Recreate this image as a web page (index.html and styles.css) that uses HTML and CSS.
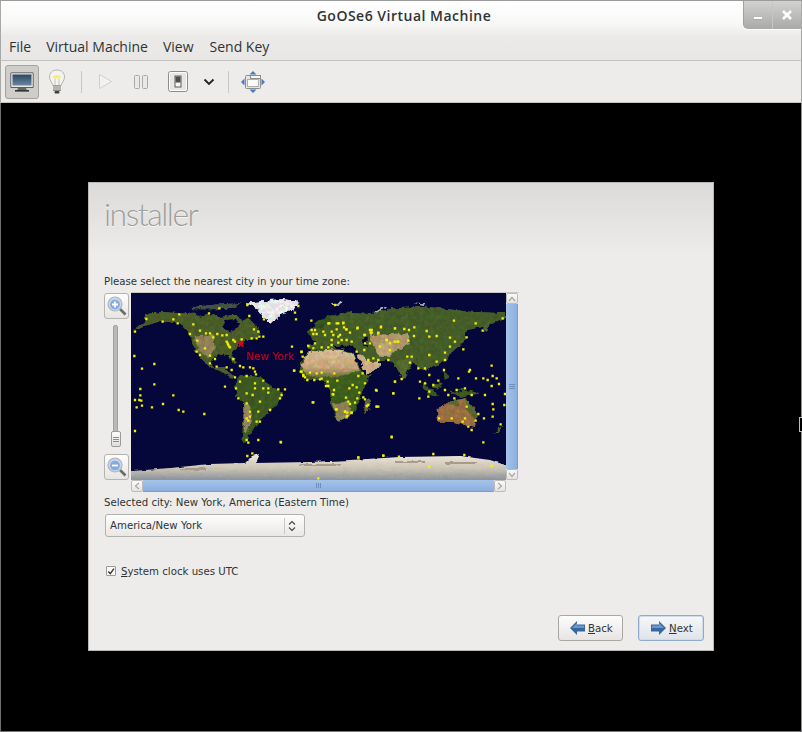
FILE: index.html
```html
<!DOCTYPE html>
<html lang="en">
<head>
<meta charset="utf-8">
<title>GoOSe6 Virtual Machine</title>
<link rel="stylesheet" href="styles.css">
</head>
<body>
<div class="window">
  <header class="chrome">
    <div class="title">GoOSe6 Virtual Machine</div>
    <div class="wm-buttons">
      <span class="wm-btn"><svg width="10" height="10" viewBox="0 0 10 10"><rect x="1" y="7" width="8" height="2.4" fill="#fff"/><rect x="1" y="9.4" width="8" height=".8" fill="#8b8b8b"/></svg></span>
      <span class="wm-btn"><svg width="12" height="12" viewBox="0 0 12 12"><path d="M2 2l8 8M10 2l-8 8" stroke="#fff" stroke-width="2.6"/></svg></span>
    </div>
    <nav class="menu">
      <span class="menu-item">File</span>
      <span class="menu-item">Virtual Machine</span>
      <span class="menu-item">View</span>
      <span class="menu-item">Send Key</span>
    </nav>
  </header>

  <div class="toolbar">
    <span class="tool tool-active">
      <svg width="24" height="22" viewBox="0 0 24 22">
        <defs><linearGradient id="scr" x1="0" y1="0" x2="0" y2="1"><stop offset="0" stop-color="#2e4560"/><stop offset="1" stop-color="#6a87a4"/></linearGradient></defs>
        <rect x=".5" y="1.500" width="23" height="15.500" rx="1" fill="#3a3a3a"/>
        <rect x="1.200" y="2.200" width="21.600" height="14" fill="#e8e8e6"/>
        <rect x="2.500" y="3.500" width="19" height="11" fill="url(#scr)"/>
        <path d="M8 17h8l1 2.400H7z" fill="#666"/><rect x="5" y="19" width="14" height="1.600" fill="#333"/>
      </svg>
    </span>
    <span class="tool">
      <svg width="18" height="26" viewBox="0 0 18 26">
        <path d="M9 1c4.700 0 7.500 3.100 7.500 7 0 3.400-2.500 5-3.400 8.500H4.900C4 13 1.500 11.400 1.500 8 1.500 4.100 4.300 1 9 1z" fill="#f4f4f1" stroke="#b4b4b0"/>
        <path d="M4.500 8c2.200-2.800 6.800-2.800 9 0-1.700 2-7.300 2-9 0z" fill="#f6ec7c"/>
        <path d="M7 10v6.500M11 10v6.500" stroke="#c6c6bc"/>
        <rect x="5" y="16.500" width="8" height="5.500" fill="#8d8d8a"/>
        <path d="M5 18h8M5 20h8" stroke="#dcdcda"/>
        <rect x="6.500" y="22" width="5" height="2.500" rx="1" fill="#3f3f3f"/>
      </svg>
    </span>
    <span class="sep sep-first"></span>
    <span class="tool tool-play">
      <svg width="15" height="17" viewBox="0 0 15 17"><path d="M1.500 1.500v14l12-7z" fill="#f3f2f0" stroke="#cfcfcc"/></svg>
    </span>
    <span class="tool tool-pause">
      <svg width="14" height="14" viewBox="0 0 14 14"><rect x=".5" y=".5" width="5" height="13" rx="1" fill="#e9e8e6" stroke="#a9a9a6"/><rect x="8.500" y=".5" width="5" height="13" rx="1" fill="#e9e8e6" stroke="#a9a9a6"/></svg>
    </span>
    <span class="tool tool-power">
      <svg width="20" height="21" viewBox="0 0 20 21">
        <rect x=".5" y=".5" width="19" height="20" rx="2" fill="#fafaf9" stroke="#8d8d8b"/>
        <rect x="2" y="2" width="16" height="17" rx="1" fill="#e6e6e4"/>
        <rect x="7" y="5" width="6" height="11" fill="#f5f5f4" stroke="#5a5a5a"/>
        <rect x="7.500" y="5.500" width="5" height="6" fill="#4c4c4c"/>
      </svg>
    </span>
    <span class="tool tool-chev">
      <svg width="12" height="8" viewBox="0 0 12 8"><path d="M1.500 1.500L6 6l4.500-4.500" fill="none" stroke="#222" stroke-width="1.800"/></svg>
    </span>
    <span class="sep sep-second"></span>
    <span class="tool tool-full">
      <svg width="24" height="22" viewBox="0 0 24 22">
        <path d="M12 0l3.500 3.500h-7zM12 22l3.500-3.500h-7zM0 11l3.500-3.500v7zM24 11l-3.500-3.500v7z" fill="#4a7ab8"/>
        <rect x="4.500" y="4.500" width="15" height="13" rx="1" fill="#e4e4e2" stroke="#8e8e8c"/>
        <rect x="9.500" y="4.500" width="10" height="3" fill="#f6f6f5" stroke="#8e8e8c"/>
        <rect x="6.500" y="8.500" width="11" height="7" fill="#fbfbfa" stroke="#b0b0ae"/>
      </svg>
    </span>
  </div>

  <main class="viewport">
    <section class="installer">
      <div class="banner"><span class="logo">installer</span></div>
      <div class="content">
        <p class="label">Please select the nearest city in your time zone:</p>
        <div class="map-row">
          <div class="zoom-col">
            <span class="zoom-btn">
              <svg width="22" height="22" viewBox="0 0 22 22">
                <path d="M13.500 13.500l6 6" stroke="#6b6b6b" stroke-width="2.600"/>
                <circle cx="9" cy="9" r="7" fill="#c3d6ee" stroke="#b4b4b4" stroke-width="1.200"/>
                <circle cx="9" cy="9.500" r="4.800" fill="#86aadd"/>
                <path d="M6 9.500h6M9 6.500v6" stroke="#fff" stroke-width="1.800"/>
              </svg>
            </span>
            <div class="slider"><span class="slider-track"></span><span class="slider-thumb"><i></i><i></i><i></i></span></div>
            <span class="zoom-btn">
              <svg width="22" height="22" viewBox="0 0 22 22">
                <path d="M13.500 13.500l6 6" stroke="#6b6b6b" stroke-width="2.600"/>
                <circle cx="9" cy="9" r="7" fill="#c3d6ee" stroke="#b4b4b4" stroke-width="1.200"/>
                <circle cx="9" cy="9.500" r="4.800" fill="#86aadd"/>
                <path d="M6 9.500h6" stroke="#fff" stroke-width="1.800"/>
              </svg>
            </span>
          </div>
          <div class="map-scroller">
            <div class="map-top">
              <svg class="map" width="375" height="187" viewBox="131 293 375 187">
                <defs>
                  <linearGradient id="ice" x1="0" y1="0" x2="0" y2="1"><stop offset="0" stop-color="#efe9dc"/><stop offset=".4" stop-color="#cbc4b4"/><stop offset=".72" stop-color="#8a929b"/><stop offset="1" stop-color="#cdcdca"/></linearGradient>
                  <linearGradient id="sahara" x1="0" y1="0" x2="0" y2="1"><stop offset="0" stop-color="#ecd2a6"/><stop offset=".65" stop-color="#dcb586"/><stop offset="1" stop-color="#6f7a3c"/></linearGradient>
                  <filter id="soft" x="0" y="0" width="100%" height="100%">
                    <feTurbulence type="fractalNoise" baseFrequency=".2" numOctaves="3" seed="7" result="n"/>
                    <feDisplacementMap in="SourceGraphic" in2="n" scale="5" xChannelSelector="R" yChannelSelector="G" result="d"/>
                    <feComposite in="d" in2="n" operator="arithmetic" k1="1" k2=".5" result="m"/>
                    <feMerge result="o"><feMergeNode in="d"/><feMergeNode in="m"/></feMerge>
                    <feGaussianBlur in="o" stdDeviation=".45"/>
                  </filter>
                  <filter id="soft-ice" x="0" y="0" width="100%" height="100%">
                    <feTurbulence type="fractalNoise" baseFrequency=".12 .3" numOctaves="2" seed="3" result="n"/>
                    <feDisplacementMap in="SourceGraphic" in2="n" scale="3" xChannelSelector="R" yChannelSelector="G"/>
                    <feGaussianBlur stdDeviation=".5"/>
                  </filter>
                </defs>
                <rect x="131" y="293" width="375" height="187" fill="#05063a"/>
                <g filter="url(#soft)">
                  <rect x="131" y="293" width="375" height="187" fill="none"/>
                  <g transform="translate(100 290) scale(.3333)">
                    <path fill="#52682f" d="M135 72L190 66 240 70 285 68 300 80 340 72 360 82 400 74 425 90 450 88 470 112 482 128 462 148 435 150 410 172 395 190 410 218 402 222 388 195 360 192 338 205 328 222 345 232 372 232 385 245 405 262 392 262 365 245 335 232 310 212 288 185 270 135 240 100 205 92 165 98 130 112 100 122 135 95z"/>
                    <path fill="#05063a" d="M372 90L405 88 420 105 405 120 385 125 370 110z"/>
                    <path fill="#4c5c4a" d="M270 52L340 44 420 40 400 56 330 58 280 58z"/>
                    <path fill="#a08f60" d="M280 140L340 135 345 180 325 205 300 185z"/>
                    <path fill="#ffffff" d="M440 38L530 30 590 30 575 55 530 75 515 100 490 80 470 55z"/>
                    <path fill="#446426" d="M405 290L420 255 470 260 510 285 548 310 530 345 505 365 480 395 455 420 435 460 425 450 430 400 435 340 410 320z"/>
                    <path fill="#a39263" d="M430 340L450 345 455 395 440 430 432 420z"/>
                  </g>
                  <g transform="translate(270 290) scale(.3333)">
                    <path fill="#ffffff" d="M0 30L40 28 85 35 70 60 30 75 5 100 0 100z"/>
                    <path fill="#456823" d="M92 215L125 180 190 175 250 190 265 225 290 260 305 252 280 295 265 340 245 375 205 395 185 350 180 300 160 270 105 268 90 240z"/>
                    <path fill="url(#sahara)" d="M92 225L120 185 190 178 250 192 270 245 190 262 110 258z"/>
                    <path fill="#9c8d5d" d="M185 340L235 335 245 375 205 395z"/>
                    <path fill="#3a5a20" d="M110 125L165 80 230 68 290 85 260 140 190 150 125 145z"/>
                    <path fill="#506a2c" d="M112 165L190 155 240 165 190 175 120 178z"/>
                    <path fill="#6b6f45" d="M285 335L300 325 298 360 283 368z"/>
                    <path fill="#e0c092" d="M262 195L290 190 335 225 290 255z"/>
                  </g>
                  <g transform="translate(310 290) scale(.3333)">
                    <path fill="#4e682f" d="M40 110L70 80 110 65 190 70 250 55 350 50 480 65 585 70 585 85 520 110 470 120 465 155 420 190 410 210 380 225 345 240 325 235 310 215 280 270 255 225 235 210 200 215 175 215 150 190 130 170 80 180 20 170 0 130 20 115z"/>
                    <path fill="#bfa574" d="M180 135L290 130 300 160 250 190 215 195 190 170z"/>
                    <path fill="#d0b484" d="M200 160L250 155 240 200 205 200z"/>
                    <path fill="#607634" d="M255 210L305 205 280 270z"/>
                    <path fill="#05063a" d="M160 140h10v28h-10zM70 167h60v8H70z"/>
                    <path fill="#446426" d="M340 275L365 300 390 320 360 315 335 290zM370 285L395 280 385 298 368 296zM400 235L415 262 405 272zM415 300L480 315 450 320zM440 295L510 310 470 318z"/>
                    <path fill="#a87a4a" d="M380 355L420 335 465 325 500 365 495 410 465 405 430 395 385 395z"/>
                    <path fill="#5f7436" d="M465 325L500 365 497 395 470 360zM408 342L440 330 445 345z"/>
                    <path fill="#55703e" d="M550 432L578 405 566 425zM520 125L528 102 540 95 530 122z"/>
                    <path fill="#c5c5be" d="M60 40L95 38 85 46 70 47zM190 66L235 48 230 52 198 68zM310 38L350 40 340 44z"/>
                  </g>
                </g>
                <g filter="url(#soft-ice)">
                  <path fill="url(#ice)" d="M120 472L170 468 210 464 245 463 252 456 260 454 256 463 310 462 350 460 400 457 460 456 490 460 518 469V490H120z"/>
                  <path fill="#a79c88" d="M180 468h26v2h-26zM300 464h40v2h-40zM395 461h30v2h-30zM445 462h32v2h-32z"/>
                </g>
                <g transform="translate(100 290) scale(.3333)">
                  <path class="dots" d="M139 87h0M238 73h0M220 88h0M188 95h0M233 100h0M280 103h0M327 70h0M358 55h0M442 45h0M448 78h0M492 88h0M105 125h0M300 122h0M270 132h0M318 130h0M330 130h0M340 142h0M352 132h0M367 136h0M380 135h0M400 150h0M425 148h0M455 145h0M470 145h0M478 140h0M490 140h0M475 125h0M462 118h0M292 152h0M315 175h0M290 185h0M330 197h0M300 195h0M345 207h0M330 220h0M350 230h0M380 155h0M385 165h0M390 172h0M383 160h0M405 155h0M388 170h0M400 207h0M420 228h0M380 232h0M395 240h0M430 232h0M450 232h0M460 235h0M465 245h0M468 253h0M103 198h0M163 222h0M126 236h0M163 283h0M121 297h0M121 316h0M105 330h0M118 330h0M124 332h0M126 347h0M110 352h0M156 352h0M189 342h0M220 316h0M236 360h0M250 365h0M313 372h0M105 423h0M375 290h0M405 262h0M420 275h0M440 258h0M465 280h0M490 272h0M505 295h0M408 295h0M440 310h0M465 295h0M490 295h0M505 308h0M535 298h0M555 298h0M545 315h0M540 325h0M458 315h0M415 325h0M480 335h0M440 340h0M510 360h0M475 365h0M450 365h0M450 380h0M440 385h0M445 392h0M470 395h0M480 395h0M440 450h0M445 458h0M475 450h0M543 457h0M442 498h0M457 490h0M583 242h0M605 185h0M602 245h0M610 255h0"/>
                </g>
                <g transform="translate(270 290) scale(.3333)">
                  <path class="dots" d="M85 48h0M75 68h0M78 88h0M124 92h0M66 170h0M94 186h0M98 200h0M72 242h0M95 245h0M100 258h0M105 262h0M120 248h0M140 250h0M155 248h0M193 250h0M112 270h0M133 270h0M150 268h0M155 266h0M173 275h0M168 288h0M175 288h0M192 300h0M188 313h0M202 272h0M238 295h0M248 285h0M265 258h0M278 250h0M285 280h0M260 292h0M262 325h0M268 308h0M228 323h0M235 335h0M255 338h0M240 342h0M128 337h0M225 365h0M232 368h0M245 368h0M230 380h0M198 358h0M280 322h0M285 328h0M295 345h0M320 350h0M318 300h0M370 310h0M375 275h0M365 440h0M32 456h0M265 503h0M340 497h0M145 565h0M125 120h0M135 120h0M130 132h0M140 132h0M160 125h0M165 135h0M185 125h0M175 100h0M205 100h0M220 100h0M222 112h0M200 118h0M190 135h0M210 135h0M230 118h0M240 128h0M262 115h0M185 150h0M205 140h0M215 150h0M230 150h0M205 158h0M245 155h0M185 165h0M175 172h0M155 172h0M130 175h0M115 168h0M135 160h0M283 135h0M300 120h0M305 128h0M325 128h0M333 112h0M375 115h0M350 150h0M360 160h0M300 160h0M285 160h0M283 180h0M260 185h0M330 170h0M360 180h0M385 155h0M355 210h0M310 205h0M295 210h0M325 210h0"/>
                </g>
                <g transform="translate(310 290) scale(.3333)">
                  <path class="dots" d="M75 45h0M58 100h0M80 100h0M100 98h0M108 118h0M143 113h0M213 110h0M255 115h0M283 117h0M297 120h0M313 112h0M350 123h0M432 92h0M497 100h0M518 122h0M578 85h0M185 120h0M205 130h0M165 135h0M182 128h0M230 150h0M255 155h0M263 155h0M295 152h0M312 138h0M358 140h0M380 138h0M420 143h0M470 142h0M435 155h0M420 170h0M460 178h0M405 188h0M358 195h0M305 200h0M292 200h0M300 218h0M405 210h0M380 215h0M325 235h0M345 235h0M358 255h0M402 240h0M480 240h0M477 245h0M545 227h0M445 265h0M498 265h0M520 265h0M533 270h0M548 258h0M560 265h0M567 282h0M545 288h0M275 267h0M255 275h0M330 275h0M345 280h0M370 285h0M385 272h0M358 305h0M405 300h0M440 300h0M465 295h0M485 315h0M525 315h0M200 302h0M250 310h0M328 325h0M355 320h0M415 315h0M433 325h0M470 350h0M585 312h0M548 342h0M550 358h0M583 345h0M505 372h0M522 385h0M548 380h0M387 385h0M425 385h0M465 385h0M497 392h0M458 395h0M475 410h0M485 420h0M572 403h0M245 442h0M520 457h0M10 337h0M80 358h0M105 365h0M125 368h0M112 378h0M70 313h0M170 348h0M200 350h0M205 350h0M145 502h0M220 497h0M267 500h0M370 492h0M463 495h0M545 528h0M358 530h0"/>
                </g>
                <path d="M238.500 341.500l5 5M243.500 341.500l-5 5" stroke="#e00018" stroke-width="1.800"/>
                <text class="city" x="246" y="360">New York</text>
              </svg>
              <div class="vscroll">
                <span class="arrow arrow-v"><svg width="8" height="6" viewBox="0 0 8 6"><path d="M1 5l3-3.500L7 5" fill="none" stroke="#a8a8a6" stroke-width="1.200"/></svg></span>
                <span class="vthumb"><i></i><i></i><i></i></span>
                <span class="arrow arrow-v"><svg width="8" height="6" viewBox="0 0 8 6"><path d="M1 1l3 3.500L7 1" fill="none" stroke="#a8a8a6" stroke-width="1.200"/></svg></span>
              </div>
            </div>
            <div class="hscroll">
              <span class="arrow arrow-h"><svg width="6" height="8" viewBox="0 0 6 8"><path d="M5 1L1.500 4 5 7" fill="none" stroke="#a8a8a6" stroke-width="1.200"/></svg></span>
              <span class="hthumb"><i></i><i></i><i></i></span>
              <span class="arrow arrow-h"><svg width="6" height="8" viewBox="0 0 6 8"><path d="M1 1l3.500 3L1 7" fill="none" stroke="#a8a8a6" stroke-width="1.200"/></svg></span>
            </div>
          </div>
        </div>
        <p class="label label-city">Selected city: New York, America (Eastern Time)</p>
        <div class="combo">
          <span class="combo-text">America/New York</span>
          <span class="combo-sep"></span>
          <svg width="8" height="12" viewBox="0 0 8 12"><path d="M1 4.500L4 1.500l3 3M1 7.500l3 3 3-3" fill="none" stroke="#444" stroke-width="1.100"/></svg>
        </div>
        <div class="check-row">
          <span class="checkbox"><svg width="9" height="9" viewBox="0 0 9 9"><path d="M1.500 4.500L3.700 7 7.800 1.200" fill="none" stroke="#333" stroke-width="1.500"/></svg></span>
          <span class="check-label"><u>S</u>ystem clock uses UTC</span>
        </div>
        <div class="actions">
          <span class="btn btn-back">
            <svg width="15" height="14" viewBox="0 0 15 14"><path d="M0 7l7-7v3.500h8v7H7V14z" fill="#36689f"/><path d="M2 7l5-5v2.500h7V7z" fill="#6b97cc"/></svg>
            <span><u>B</u>ack</span>
          </span>
          <span class="btn btn-default">
            <svg width="15" height="14" viewBox="0 0 15 14"><path d="M15 7L8 0v3.500H0v7h8V14z" fill="#36689f"/><path d="M13 7L8 2v2.500H1V7z" fill="#6b97cc"/></svg>
            <span><u>N</u>ext</span>
          </span>
        </div>
      </div>
    </section>
    <span class="edge-handle"></span>
  </main>
</div>
</body>
</html>
```
FILE: styles.css
```css
* { box-sizing: border-box; }
html, body { margin: 0; padding: 0; background: #000; }
body { width: 802px; height: 732px; overflow: hidden; font-family: "DejaVu Sans", sans-serif; }
p { margin: 0; }
i { display: block; }

.window { position: relative; width: 802px; height: 732px; display: flex; flex-direction: column; border-top: 1px solid #9b9b99; border-bottom: 1px solid #77777a; }

.chrome { position: relative; height: 60px; flex: none; background: linear-gradient(#ffffff 0, #f8f8f7 22px, #ebeae8 36px, #e8e7e5 100%); border-left: 1px solid #a8a8a6; border-right: 1px solid #a8a8a6; border-bottom: 1px solid #c3c2bf; display: flex; flex-direction: column; }
.title { height: 30px; line-height: 30px; text-align: center; padding-left: 6px; font-family: "Open Sans", sans-serif; font-size: 14px; font-weight: 600; color: #2e3436; letter-spacing: .5px; }
.wm-buttons { position: absolute; top: 0; right: 0; width: 58px; height: 28px; display: flex; background: linear-gradient(#d2d2d1, #a9a9a8); border-bottom-left-radius: 5px; border-left: 1px solid #a0a0a0; box-shadow: 0 1px 0 #fff; }
.wm-btn { flex: 1; display: flex; align-items: center; justify-content: center; }
.wm-btn + .wm-btn { border-left: 1px solid #c6c6c5; }
.menu { display: flex; height: 30px; align-items: center; padding: 1px 0 0 8px; gap: 15px; font-family: "Open Sans", sans-serif; font-size: 14px; color: #2e3436; }
.menu-item { display: block; }
.menu-item:last-child { margin-left: 1px; }

.toolbar { height: 42px; flex: none; display: flex; align-items: center; padding-left: 5px; background: #edecea; border-left: 1px solid #a8a8a6; border-right: 1px solid #a8a8a6; border-bottom: 1px solid #c3c2bf; gap: 1px; }
.tool { width: 34px; height: 34px; flex: none; display: flex; align-items: center; justify-content: center; }
.toolbar .tool:first-child { margin-left: -1px; }
.tool-active { background: #cfcdca; border: 1px solid #a5a3a0; border-radius: 3px; }
.sep { width: 1px; height: 22px; background: #c9c8c5; flex: none; }
.sep-first { margin: 0 5px 0 6px; }
.tool-pause { margin-left: 1px; }
.tool-power { margin-left: 2px; }
.tool-chev { width: 24px; margin-left: 1px; }
.sep-second { margin: 0 5px 0 6px; }
.tool-full { width: 36px; }

.viewport { flex: 1; position: relative; background: #000; padding: 79px 0 0 88px; border-left: 1px solid #6f6f6e; border-right: 1px solid #8c8c8b; }
.edge-handle { position: absolute; right: -1px; top: 314px; width: 3px; height: 15px; border: 1px solid #bdbdbb; border-right: 0; background: #000; }

.installer { width: 626px; height: 469px; margin-left: -1px; background: #edecea; border: 1px solid #b9b8b6; display: flex; flex-direction: column; }
.banner { height: 72px; flex: none; padding: 11px 0 0 15px; background: linear-gradient(#dcdbd9, #e5e4e2 55%, #edecea); }
.logo { font-family: Lato, sans-serif; font-weight: 300; font-size: 32px; line-height: 40px; color: #9e9e9d; letter-spacing: -1.5px; text-shadow: 0 1px 0 #f6f6f5; }
.content { flex: 1; display: flex; flex-direction: column; padding: 18px 9px 9px 15px; font-size: 10.2px; color: #2e3436; }
.label { height: 18px; line-height: 18px; }
.map-row { display: flex; margin-top: 1px; }
.zoom-col { width: 27px; height: 187px; margin-top: 1px; display: flex; flex-direction: column; align-items: flex-start; }
.zoom-btn { width: 25px; height: 26px; flex: none; display: flex; align-items: center; justify-content: center; background: linear-gradient(#fdfdfc, #e6e5e3); border: 1px solid #b5b4b1; border-radius: 3px; }
.slider { flex: 1; position: relative; width: 25px; }
.slider-track { position: absolute; left: 9px; top: 6px; bottom: 8px; width: 5px; background: #b9b8b5; border: 1px solid #a3a2a0; border-radius: 2px; }
.slider-thumb { position: absolute; left: 7px; top: 112px; width: 10px; height: 16px; background: linear-gradient(#fbfbfa, #dfdedc); border: 1px solid #9c9b98; border-radius: 2px; display: flex; flex-direction: column; justify-content: center; align-items: center; gap: 1px; }
.slider-thumb i { width: 6px; height: 1px; background: #8d8d8b; }

.map-scroller { display: flex; flex-direction: column; width: 388px; }
.map-top { display: flex; height: 188px; border-top: 1px solid #c9c8c5; }
.map { display: block; flex: none; }
.dots { fill: none; stroke: #f2f200; stroke-width: 7; stroke-linecap: square; }
.city { font-family: "DejaVu Sans", sans-serif; font-size: 10.500px; fill: #c4001c; }
.vscroll { width: 12px; height: 187px; display: flex; flex-direction: column; }
.arrow { display: flex; align-items: center; justify-content: center; flex: none; background: linear-gradient(#fafaf9, #e4e3e1); border: 1px solid #bdbcb9; border-radius: 2px; }
.arrow-v { width: 12px; height: 11px; }
.arrow-h { width: 12px; height: 12px; }
.vthumb { flex: 1; display: flex; flex-direction: column; align-items: center; justify-content: center; gap: 1px; background: linear-gradient(90deg, #a6c3e9, #8bafe0); border-right: 1px solid #7d9cc8; }
.vthumb i { width: 6px; height: 1px; background: #6f8db6; }
.hscroll { display: flex; width: 375px; height: 12px; }
.hthumb { flex: 1; display: flex; align-items: center; justify-content: center; gap: 1px; background: linear-gradient(#a6c3e9, #8bafe0); border-bottom: 1px solid #7d9cc8; }
.hthumb i { width: 1px; height: 5px; background: #6f8db6; }

.label-city { margin-top: 1px; height: 20px; line-height: 20px; }
.combo { margin: 1px 0 0 1px; width: 200px; height: 23px; display: flex; align-items: center; padding: 0 8px 0 4px; background: linear-gradient(#fdfdfc, #e9e8e6); border: 1px solid #b2b1ae; border-radius: 3px; }
.combo-text { flex: 1; }
.combo-sep { width: 1px; height: 16px; background: #c9c8c5; margin-right: 3px; }
.check-row { display: flex; align-items: center; gap: 5px; margin: 25px 0 0 2px; height: 18px; }
.checkbox { width: 10px; height: 10px; display: flex; align-items: center; justify-content: center; background: #f8f8f7; border: 1px solid #9a9a98; border-radius: 1px; }
.actions { margin-top: auto; display: flex; justify-content: flex-end; gap: 15px; }
.btn { width: 66px; height: 26px; display: flex; align-items: center; gap: 3px; padding-left: 11px; background: linear-gradient(#fdfdfc, #e6e5e3); border: 1px solid #a9a8a5; border-radius: 3px; }
.btn-back { width: 65px; }
.btn-default { border-color: #8eaace; padding-left: 12px; background: linear-gradient(#f7f8f9, #dfe3e8); box-shadow: inset 0 0 0 1px #cfdcec; }
```
